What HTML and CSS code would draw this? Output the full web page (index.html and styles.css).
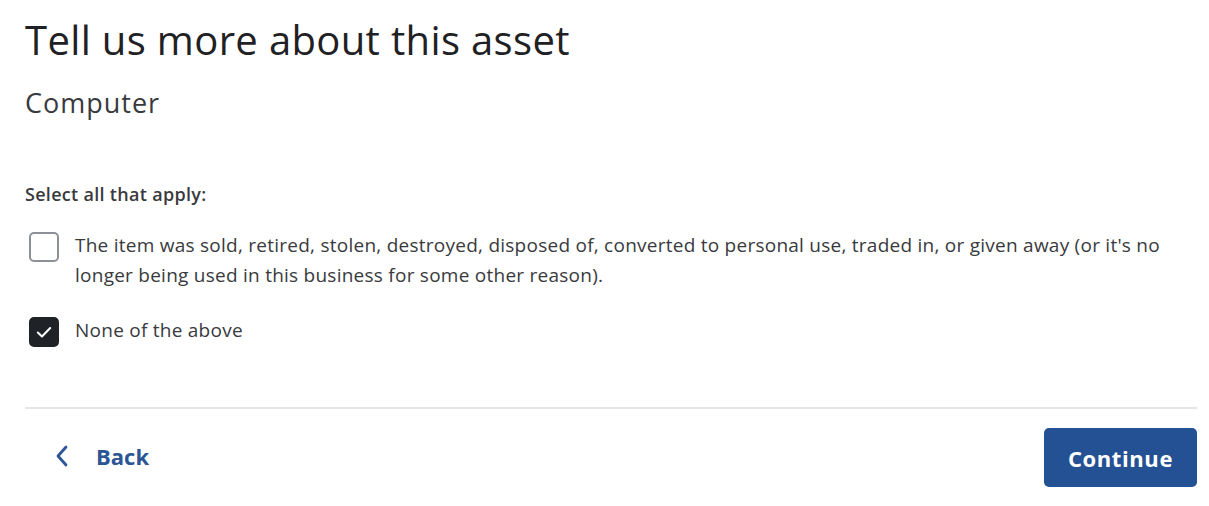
FILE: index.html
```html
<!DOCTYPE html>
<html>
<head>
<meta charset="utf-8">
<link rel="stylesheet" href="styles.css">
</head>
<body>
<main class="page">
  <h1 class="title">Tell us more about this asset</h1>
  <h2 class="subtitle">Computer</h2>
  <p class="prompt">Select all that apply:</p>
  <div class="options">
    <label class="option">
      <span class="box"></span>
      <span class="label">The item was sold, retired, stolen, destroyed, disposed of, converted to personal use, traded in, or given away (or it's no longer being used in this business for some other reason).</span>
    </label>
    <label class="option">
      <span class="box checked">
        <svg viewBox="0 0 16 16" width="18" height="18"><path d="M2.5 8.5 L6.2 12 L13.5 4.5" fill="none" stroke="#fff" stroke-width="1.8" stroke-linecap="round" stroke-linejoin="round"/></svg>
      </span>
      <span class="label">None of the above</span>
    </label>
  </div>
  <div class="footer">
    <a class="back" href="#">
      <svg viewBox="0 0 14 22" width="14" height="22"><path d="M11 2 L3 11 L11 20" fill="none" stroke="#2c5594" stroke-width="2.8" stroke-linecap="round" stroke-linejoin="round"/></svg>
      <span>Back</span>
    </a>
    <button class="continue">Continue</button>
  </div>
</main>
</body>
</html>
```

FILE: styles.css
```css
* { box-sizing: border-box; }
html, body { margin: 0; padding: 0; background: #fff; }
body {
  font-family: "Open Sans", "Lato", sans-serif;
  color: #393a3d;
}
.page {
  padding: 14px 12px 0 25px;
}
.title {
  margin: 0;
  font-size: 40px;
  font-weight: 400;
  line-height: 52px;
  color: #1f2124;
  letter-spacing: 0.35px;
}
.subtitle {
  margin: 20px 0 0 0;
  font-size: 27px;
  font-weight: 400;
  line-height: 34px;
  color: #393a3d;
  letter-spacing: 1px;
}
.prompt {
  margin: 62px 0 0 0;
  font-size: 18px;
  font-weight: 600;
  line-height: 24px;
  color: #393a3d;
  letter-spacing: 0.3px;
}
.options {
  margin-top: 26px;
  display: flex;
  flex-direction: column;
  gap: 27px;
}
.option {
  display: flex;
  align-items: flex-start;
  gap: 16px;
  padding-left: 4px;
}
.box {
  flex: none;
  width: 30px;
  height: 30px;
  border: 2px solid #8d9096;
  border-radius: 5px;
  background: #fff;
  display: flex;
  align-items: center;
  justify-content: center;
}
.box.checked {
  background: #1f2226;
  border-color: #1f2226;
}
.label {
  font-size: 19px;
  line-height: 30px;
  margin-top: -2px;
  color: #393a3d;
  letter-spacing: 0.25px;
}
.footer {
  margin-top: 60px;
  border-top: 2px solid #e3e5e8;
  padding-top: 19px;
  display: flex;
  justify-content: space-between;
  align-items: center;
}
.back {
  display: flex;
  align-items: center;
  gap: 27px;
  padding-left: 30px;
  margin-top: -3px;
  color: #2c5594;
  text-decoration: none;
  font-size: 22px;
  font-weight: 700;
}
.continue {
  width: 153px;
  height: 59px;
  background: #245193;
  color: #fff;
  border: none;
  border-radius: 5px;
  font-family: inherit;
  font-size: 22px;
  font-weight: 700;
  letter-spacing: 0.6px;
}
```
